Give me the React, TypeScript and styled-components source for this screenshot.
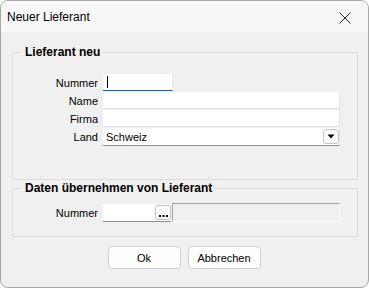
import React from "react";
import styled, { createGlobalStyle } from "styled-components";

const Global = createGlobalStyle`
  html, body { margin: 0; padding: 0; background: #ffffff; }
  * { box-sizing: border-box; }
`;

const Window = styled.div`
  width: 369px;
  height: 288px;
  border: 1px solid #a8a8a8;
  border-radius: 8px;
  overflow: hidden;
  display: flex;
  flex-direction: column;
  background: #f0f0f0;
  font-family: "Liberation Sans", Arial, sans-serif;
  color: #000;
`;

const TitleBar = styled.div`
  height: 31px;
  flex: none;
  display: flex;
  align-items: center;
  justify-content: space-between;
  padding-left: 6px;
  background: #f7f7f7;
  font-size: 12px;
`;

const CloseButton = styled.div`
  width: 46px;
  height: 31px;
  display: flex;
  align-items: center;
  justify-content: center;
  padding-top: 2px;
`;

const Client = styled.div`
  flex: 1;
  display: flex;
  flex-direction: column;
  padding: 13px 10px 0 11px;
`;

const Group = styled.fieldset<{ $pt: number; $pb: number; $mt?: number }>`
  margin: ${(p) => p.$mt ?? 0}px 0 0 0;
  min-width: 0;
  border: 1px solid #dcdcdc;
  padding: ${(p) => p.$pt}px 17px ${(p) => p.$pb}px 0;
  display: flex;
  flex-direction: column;
`;

const Legend = styled.legend`
  margin-left: 9px;
  padding: 0 3px;
  font-size: 12px;
  line-height: 14px;
  font-weight: bold;
`;

const Row = styled.div`
  display: flex;
  align-items: center;
  height: 18px;
  gap: 5px;
`;

const Label = styled.span`
  width: 85px;
  flex: none;
  text-align: right;
  font-size: 11px;
`;

const TextBox = styled.div<{ $width?: number; $bottom: string }>`
  ${(p) => (p.$width ? `width: ${p.$width}px; flex: none;` : "flex: 1;")}
  height: 17px;
  align-self: flex-start;
  background: #fff;
  border-right: 1px solid #e6e6e6;
  border-bottom: 1px solid ${(p) => p.$bottom};
  display: flex;
  align-items: center;
  padding-left: 3px;
  font-size: 11px;
`;

const Caret = styled.span`
  width: 1px;
  height: 12px;
  background: #000;
  margin-left: 1px;
`;

const Combo = styled.div`
  flex: 1;
  height: 18px;
  background: #fff;
  border-bottom: 1px solid #8a8a8a;
  border-right: 1px solid #e6e6e6;
  display: flex;
  align-items: center;
  justify-content: space-between;
  padding-left: 3px;
  font-size: 11px;
`;

const SmallButton = styled.div`
  width: 16px;
  height: 15px;
  flex: none;
  border: 1px solid #c4c4c4;
  border-radius: 3px;
  background: #fbfbfb;
  display: flex;
  align-items: center;
  justify-content: center;
`;

const LookupBox = styled.div`
  width: 68px;
  flex: none;
  height: 18px;
  background: #fff;
  border-bottom: 1px solid #909090;
  display: flex;
  align-items: center;
  justify-content: flex-end;
`;

const DisabledBox = styled.div`
  flex: 1;
  height: 19px;
  align-self: flex-start;
  margin-top: -1px;
  margin-left: -4px;
  background: #f0f0f0;
  border-top: 1px solid #a0a0a0;
  border-left: 1px solid #a0a0a0;
  border-right: 1px solid #ffffff;
  border-bottom: 1px solid #ffffff;
`;

const ButtonRow = styled.div`
  display: flex;
  justify-content: center;
  gap: 7px;
  margin-top: 9px;
  padding-right: 2px;
`;

const DialogButton = styled.div`
  width: 73px;
  height: 23px;
  border: 1px solid #d0d0d0;
  border-radius: 4px;
  background: #fdfdfd;
  display: flex;
  align-items: center;
  justify-content: center;
  font-size: 11px;
`;

export default function App() {
  return (
    <>
      <Global />
      <Window>
        <TitleBar>
          <span>Neuer Lieferant</span>
          <CloseButton>
            <svg width="12" height="12" viewBox="0 0 12 12">
              <path d="M0.5 0.5 L11.5 11.5 M11.5 0.5 L0.5 11.5" stroke="#222" strokeWidth="1" fill="none" />
            </svg>
          </CloseButton>
        </TitleBar>
        <Client>
          <Group $pt={15} $pb={33}>
            <Legend>Lieferant neu</Legend>
            <Row>
              <Label>Nummer</Label>
              <TextBox $width={70} $bottom="#0067c0">
                <Caret />
              </TextBox>
            </Row>
            <Row>
              <Label>Name</Label>
              <TextBox $bottom="#e3e3e3" />
            </Row>
            <Row>
              <Label>Firma</Label>
              <TextBox $bottom="#e3e3e3" />
            </Row>
            <Row>
              <Label>Land</Label>
              <Combo>
                <span>Schweiz</span>
                <SmallButton>
                  <svg width="8" height="5" viewBox="0 0 8 5">
                    <polygon points="0.5,0.5 7.5,0.5 4,4.5" fill="#000" />
                  </svg>
                </SmallButton>
              </Combo>
            </Row>
          </Group>
          <Group $pt={9} $pb={14} $mt={1}>
            <Legend>Daten übernehmen von Lieferant</Legend>
            <Row>
              <Label>Nummer</Label>
              <LookupBox>
                <SmallButton>
                  <svg width="10" height="11" viewBox="0 0 10 11">
                    <rect x="1" y="8" width="2" height="2" fill="#000" />
                    <rect x="4.5" y="8" width="2" height="2" fill="#000" />
                    <rect x="8" y="8" width="2" height="2" fill="#000" />
                  </svg>
                </SmallButton>
              </LookupBox>
              <DisabledBox />
            </Row>
          </Group>
          <ButtonRow>
            <DialogButton>Ok</DialogButton>
            <DialogButton>Abbrechen</DialogButton>
          </ButtonRow>
        </Client>
      </Window>
    </>
  );
}
